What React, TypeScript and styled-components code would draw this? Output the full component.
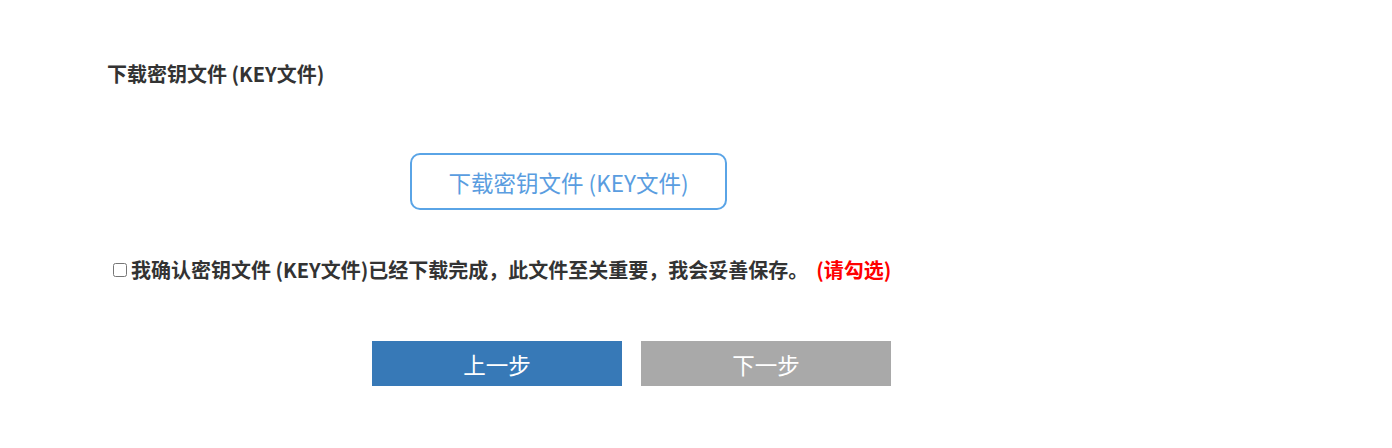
import React from "react";
import styled, { createGlobalStyle } from "styled-components";

const Global = createGlobalStyle`
  html, body { margin: 0; padding: 0; background: #fff; }
  body { font-family: "Noto Sans CJK SC", "Noto Sans", sans-serif; color: #333; }
`;

const Page = styled.div`
  display: flex;
  flex-direction: column;
  padding: 62px 0 0 107px;
`;

const Title = styled.h3`
  margin: 0;
  font-size: 20px;
  font-weight: 700;
  line-height: 24px;
  color: #333;
`;

const DownloadRow = styled.div`
  display: flex;
  padding-left: 303px;
  margin-top: 67px;
`;

const DownloadButton = styled.button`
  width: 317px;
  height: 57px;
  padding: 0;
  border: 2px solid #5aa4e6;
  border-radius: 10px;
  background: #fff;
  color: #5a9de0;
  font-family: inherit;
  font-size: 22.5px;
  cursor: pointer;
`;

const ConfirmRow = styled.label`
  display: flex;
  align-items: center;
  margin-top: 48px;
  padding-left: 1px;
  font-size: 20px;
  font-weight: 700;
  line-height: 24px;
  color: #333;
  white-space: nowrap;
`;

const Check = styled.input`
  width: 14px;
  height: 14px;
  margin: 0 4px 0 5px;
  accent-color: #555;
`;

const Warn = styled.span`
  color: #f00;
  margin-left: 8px;
`;

const ButtonRow = styled.div`
  display: flex;
  gap: 19px;
  padding-left: 265px;
  margin-top: 59px;
`;

const StepButton = styled.button<{ $primary?: boolean }>`
  width: 250px;
  height: 45px;
  padding: 0;
  border: none;
  background: ${(p) => (p.$primary ? "#3779b7" : "#a9a9a9")};
  color: #fff;
  font-family: inherit;
  font-size: 22.5px;
  cursor: pointer;
`;

export default function App() {
  return (
    <>
      <Global />
      <Page>
        <Title>下载密钥文件 (KEY文件)</Title>
        <DownloadRow>
          <DownloadButton>下载密钥文件 (KEY文件)</DownloadButton>
        </DownloadRow>
        <ConfirmRow>
          <Check type="checkbox" />
          我确认密钥文件 (KEY文件)已经下载完成，此文件至关重要，我会妥善保存。
          <Warn>(请勾选)</Warn>
        </ConfirmRow>
        <ButtonRow>
          <StepButton $primary>上一步</StepButton>
          <StepButton>下一步</StepButton>
        </ButtonRow>
      </Page>
    </>
  );
}
